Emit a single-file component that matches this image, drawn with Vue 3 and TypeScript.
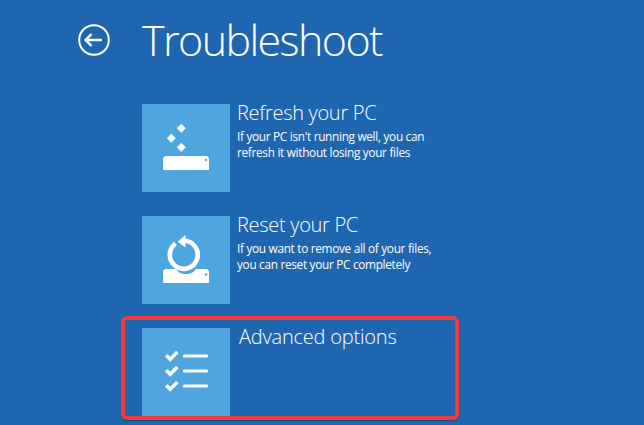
<script setup lang="ts">
// Windows 8 style "Troubleshoot" recovery screen.
const options = [
  {
    id: "refresh",
    title: "Refresh your PC",
    lines: ["If your PC isn't running well, you can", "refresh it without losing your files"],
  },
  {
    id: "reset",
    title: "Reset your PC",
    lines: ["If you want to remove all of your files,", "you can reset your PC completely"],
  },
  { id: "advanced", title: "Advanced options", lines: [] as string[] },
];
</script>

<template>
  <main class="screen">
    <header class="head">
      <svg class="back" width="32" height="32" viewBox="0 0 32 32" fill="none" stroke="#fff">
        <circle cx="16" cy="16" r="14.8" stroke-width="2" />
        <path d="M7.5 16H24M13.5 10l-6 6 6 6" stroke-width="2.4" />
      </svg>
      <h1>Troubleshoot</h1>
    </header>

    <section class="list">
      <article v-for="o in options" :key="o.id" class="row" :class="o.id">
        <div class="tile">
          <svg width="88" height="88" viewBox="0 0 88 88" fill="#fff">
            <template v-if="o.id === 'refresh'">
              <path d="M39.3 19.8l4.5 4.5-4.5 4.5-4.5-4.5zM29.3 29.8l4.5 4.5-4.5 4.5-4.5-4.5zM39.3 38.8l4.5 4.5-4.5 4.5-4.5-4.5z" />
              <path d="M23 52h42l2 2v12H21V54z" />
              <path d="M64 54.5v3M62.5 56h3" stroke="#4fa6de" stroke-width="1.2" />
            </template>
            <template v-else-if="o.id === 'reset'">
              <path d="M23 53h11c2 3 5 5 10 5s8-2 10-5h11l2 2v12H21V55z" />
              <path d="M64 57v3M62.5 58.5h3" stroke="#4fa6de" stroke-width="1.2" />
              <path d="M33.5 27.5A14 14 0 1 0 42 24.8" fill="none" stroke="#fff" stroke-width="4.6" />
              <path d="M35.7 25.7L43.5 19v12.5z" />
            </template>
            <template v-else>
              <g fill="none" stroke="#fff">
                <path d="M24.2 27.2l4 4 7.2-7.2M24.2 42.2l4 4 7.2-7.2M24.2 57.2l4 4 7.2-7.2" stroke-width="3.6" />
                <path d="M42.3 28h22.4M42.3 43h22.4M42.3 58h22.4" stroke-width="3" stroke-linecap="round" />
              </g>
            </template>
          </svg>
        </div>
        <div class="text">
          <h2>{{ o.title }}</h2>
          <p v-for="line in o.lines" :key="line">{{ line }}</p>
        </div>
        <div v-if="o.id === 'advanced'" class="highlight" />
      </article>
    </section>
  </main>
</template>

<style>
html,
body {
  margin: 0;
  background: #1f66b1;
  overflow: hidden;
}
</style>

<style scoped>
.screen {
  width: 644px;
  height: 425px;
  overflow: hidden;
  background: #1f66b1;
  color: #fff;
  font-family: "Open Sans", "Noto Sans", sans-serif;
}

.head {
  display: flex;
  align-items: center;
  gap: 32px;
  height: 80px;
  padding-left: 78px;
}

.back {
  flex-shrink: 0;
  margin-bottom: 1px;
}

h1 {
  margin: 0;
  font-size: 43px;
  font-weight: 300;
  line-height: 78px;
  letter-spacing: -1.6px;
}

.list {
  display: flex;
  flex-direction: column;
  gap: 24px;
  padding: 24px 0 0 142px;
}

.row {
  position: relative;
  display: flex;
  gap: 7px;
  height: 88px;
}

.tile {
  width: 88px;
  height: 88px;
  flex-shrink: 0;
  background: #4fa6de;
}

.tile svg {
  display: block;
}

h2 {
  margin: -1px 0 5px;
  font-size: 20px;
  font-weight: 300;
  line-height: 20px;
  letter-spacing: -0.3px;
}

p {
  margin: 0;
  font-size: 11.8px;
  line-height: 16px;
  letter-spacing: -0.3px;
}

.advanced .text {
  padding-left: 2px;
}

.advanced h2 {
  letter-spacing: -0.2px;
}

.highlight {
  position: absolute;
  left: -21px;
  top: -12px;
  width: 338px;
  height: 104px;
  box-sizing: border-box;
  border: 4px solid #ef3a3e;
  border-radius: 6px;
  box-shadow: 0 1px 1px rgba(20, 40, 80, 0.5);
}
</style>
